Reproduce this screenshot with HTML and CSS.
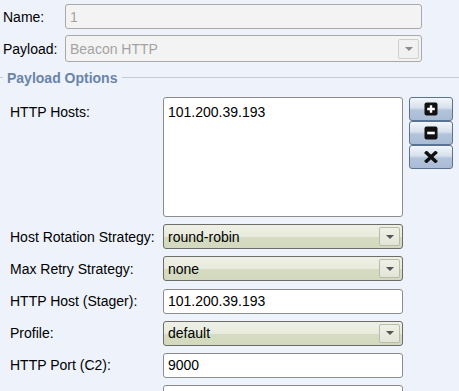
FILE: index.html
```html
<!DOCTYPE html>
<html>
<head>
<meta charset="utf-8">
<link rel="stylesheet" href="styles.css">
</head>
<body>
<div class="top">
  <div class="lbl">Name:</div>
  <div class="field dis name">1</div>
  <div class="lbl">Payload:</div>
  <div class="field dis psel"><span>Beacon HTTP</span><span class="arr dis-arr"><i class="tri"></i></span></div>
</div>
<div class="header"><span class="hl short"></span><span class="htext">Payload Options</span><span class="hl long"></span></div>
<div class="opts">
  <div class="lbl top-lbl">HTTP Hosts:</div>
  <div class="area">101.200.39.193</div>
  <div class="btns">
    <div class="btn"><svg width="14" height="14" viewBox="0 0 14 14"><rect x="0.5" y="0.5" width="13" height="13" rx="2" fill="#111"/><path d="M7 3.2v7.6M3.2 7h7.6" stroke="#fff" stroke-width="2.4"/></svg></div>
    <div class="btn"><svg width="14" height="14" viewBox="0 0 14 14"><rect x="0.5" y="0.5" width="13" height="13" rx="2" fill="#111"/><path d="M3.2 7h7.6" stroke="#fff" stroke-width="2.6"/></svg></div>
    <div class="btn"><svg width="14" height="12" viewBox="0 0 14 12"><path d="M2.5 1.8l9 8.4M11.5 1.8l-9 8.4" stroke="#111" stroke-width="3.4" stroke-linecap="square"/></svg></div>
  </div>

  <div class="lbl">Host Rotation Strategy:</div>
  <div class="sel"><span>round-robin</span><span class="arr"><i class="tri"></i></span></div>
  <div></div>

  <div class="lbl">Max Retry Strategy:</div>
  <div class="sel"><span>none</span><span class="arr"><i class="tri"></i></span></div>
  <div></div>

  <div class="lbl">HTTP Host (Stager):</div>
  <div class="inp">101.200.39.193</div>
  <div></div>

  <div class="lbl">Profile:</div>
  <div class="sel"><span>default</span><span class="arr"><i class="tri"></i></span></div>
  <div></div>

  <div class="lbl">HTTP Port (C2):</div>
  <div class="inp">9000</div>
  <div></div>

  <div class="lbl"></div>
  <div class="inp"></div>
  <div></div>
</div>
</body>
</html>
```
FILE: styles.css
```css
html, body {
  margin: 0;
  padding: 0;
}
body {
  width: 459px;
  height: 391px;
  overflow: hidden;
  background: #eef2fa;
  font-family: "Liberation Sans", Arial, sans-serif;
  font-size: 14px;
  color: #000;
}
.top {
  display: grid;
  grid-template-columns: 62px 357px;
  row-gap: 6px;
  padding: 4px 0 0 3px;
  align-items: center;
}
.lbl {
  white-space: nowrap;
  line-height: 16px;
}
.field {
  box-sizing: border-box;
  border: 1px solid #a9a9a9;
  border-radius: 3px;
  background: #f3f3f3;
  color: #a3a3a3;
  padding: 0 4px;
  display: flex;
  align-items: center;
}
.name { height: 25px; }
.psel {
  height: 27px;
  justify-content: space-between;
  padding-right: 2px;
}
.header {
  display: flex;
  align-items: center;
  height: 16px;
  margin-top: 8px;
}
.hl {
  height: 1px;
  background: #c4ccd8;
  margin-top: -1px;
}
.short { width: 3px; }
.long { flex: 1; }
.htext {
  font-weight: bold;
  color: #6a84a8;
  padding: 0 5px 0 4px;
  line-height: 16px;
}
.opts {
  display: grid;
  grid-template-columns: 153px 240px 50px;
  row-gap: 7.2px;
  padding: 11px 0 0 10px;
  align-items: center;
}
.top-lbl {
  align-self: start;
  padding-top: 7px;
}
.area {
  box-sizing: border-box;
  height: 120px;
  background: #fff;
  border: 1px solid #8c8c8c;
  border-radius: 3px;
  padding: 6px 4px;
  line-height: 16px;
}
.btns {
  align-self: start;
  display: flex;
  flex-direction: column;
  padding-left: 6px;
}
.btn {
  box-sizing: border-box;
  width: 44px;
  height: 24px;
  border: 1px solid #5b7393;
  border-radius: 3px;
  background: linear-gradient(#f3f6fb 0%, #d6e0ec 45%, #b3c4da 55%, #a9bcd5 100%);
  display: flex;
  align-items: center;
  justify-content: center;
}
.inp {
  box-sizing: border-box;
  height: 25px;
  background: #fff;
  border: 1px solid #8c8c8c;
  border-radius: 3px;
  padding: 0 4px;
  display: flex;
  align-items: center;
}
.sel {
  box-sizing: border-box;
  height: 25px;
  border: 1px solid #6c6c68;
  border-radius: 3px;
  background: linear-gradient(#eef0e6 0%, #e8ebdc 50%, #d6dcc2 52%, #d3d9bd 100%);
  padding: 0 2px 0 4px;
  display: flex;
  align-items: center;
  justify-content: space-between;
}
.arr {
  box-sizing: border-box;
  width: 21px;
  height: 19px;
  border: 1px solid #b9bcab;
  border-radius: 2px;
  background: linear-gradient(#eef0e7, #e2e5d6);
  display: flex;
  align-items: center;
  justify-content: center;
}
.dis-arr {
  border-color: #cfcfcf;
  background: #f1f1f1;
  height: 20px;
}
.tri {
  display: block;
  width: 0;
  height: 0;
  border-left: 4px solid transparent;
  border-right: 4px solid transparent;
  border-top: 4px solid #555;
}
.dis-arr .tri {
  border-top-color: #8a8a8a;
}
```
